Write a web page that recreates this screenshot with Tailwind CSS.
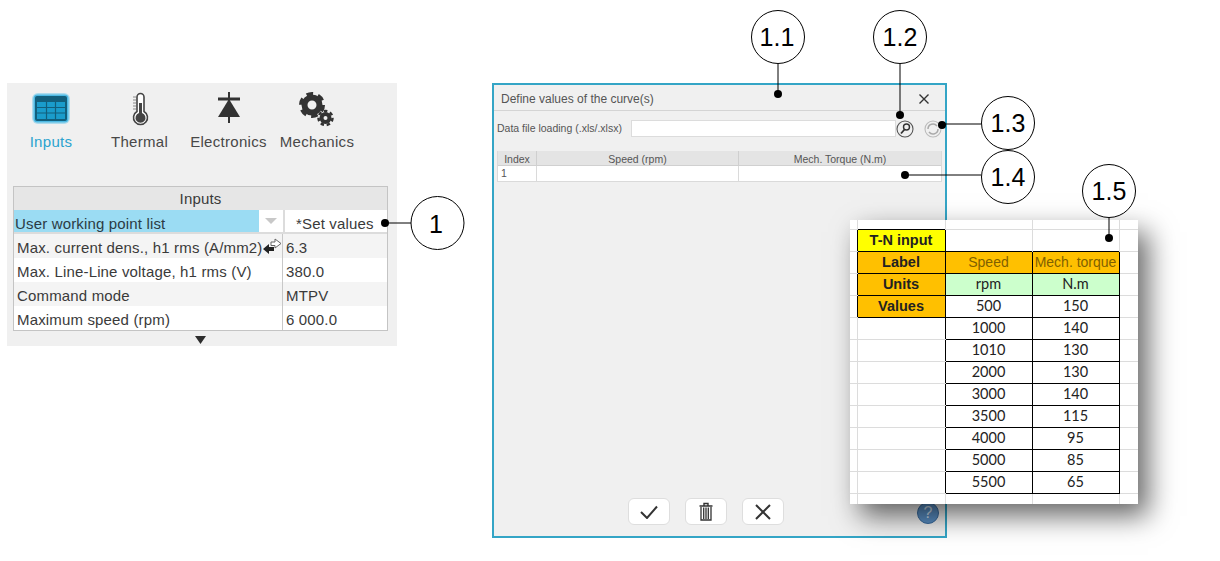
<!DOCTYPE html>
<html lang="en">
<head>
<meta charset="UTF-8">
<title>Define values of the curve(s)</title>
<script src="https://cdn.jsdelivr.net/npm/@tailwindcss/browser@4"></script>
</head>
<body class="bg-white font-['Liberation_Sans',sans-serif]">
<div class="relative w-[1220px] h-[561px] overflow-hidden">
  <div class="flex items-start pt-[83px] pl-[7px]">

    <!-- Left panel -->
    <div class="w-[390px] h-[263px] bg-[#f0f0f0] flex flex-col shrink-0">
      <div class="grid grid-cols-[88px_89px_89px_88px] h-[103px] pt-[8px] text-[15px] tracking-[0.3px] text-[#484848]">
        <div class="flex flex-col items-center">
          <svg class="h-[36px] w-[48px]" viewBox="0 0 48 36">
            <rect x="5" y="2" width="38" height="31" rx="6" fill="#5cc4ea" opacity="0.45"/>
            <rect x="6.500" y="3.500" width="35" height="28" rx="4" fill="#35b0e0" opacity="0.8"/>
            <rect x="8" y="5" width="32" height="25" rx="2" fill="#125f7c"/>
            <rect x="10" y="11" width="28" height="17" fill="#1a9ccb"/>
            <path d="M10 16.500H38M10 22H38M19.500 11V28M28.500 11V28" stroke="#125f7c" stroke-width="1.200" fill="none"/>
          </svg>
          <span class="mt-[4px] text-[#2aa3cf]">Inputs</span>
        </div>
        <div class="flex flex-col items-center">
          <svg class="h-[36px] w-[24px]" viewBox="0 0 24 36">
            <path d="M9 20V6a3.500 3.500 0 0 1 7 0V20.500a7 7 0 1 1-7 0Z" fill="#fff" stroke="#444" stroke-width="1.600"/>
            <path d="M11 12h3v10a5 5 0 1 1-3 0Z" fill="#444"/>
            <path d="M5 6h3M5 9h3M5 12h3M5 15h3M5 18h3" stroke="#888" stroke-width="1"/>
          </svg>
          <span class="mt-[4px]">Thermal</span>
        </div>
        <div class="flex flex-col items-center">
          <svg class="h-[36px] w-[26px]" viewBox="0 0 26 36">
            <path d="M13 1V32" stroke="#333" stroke-width="2"/>
            <path d="M2 8H24" stroke="#333" stroke-width="3"/>
            <path d="M13 8L24 26H2Z" fill="#333"/>
          </svg>
          <span class="mt-[4px]">Electronics</span>
        </div>
        <div class="flex flex-col items-center">
          <svg class="h-[36px] w-[40px]" viewBox="0 0 40 36">
            <circle cx="15" cy="14" r="7.500" fill="none" stroke="#333" stroke-width="6"/>
            <circle cx="15" cy="14" r="11" fill="none" stroke="#333" stroke-width="4" stroke-dasharray="6.500 5.020"/>
            <circle cx="28.500" cy="27" r="4" fill="none" stroke="#333" stroke-width="4"/>
            <circle cx="28.500" cy="27" r="7" fill="none" stroke="#333" stroke-width="2.500" stroke-dasharray="3.500 2.720"/>
          </svg>
          <span class="mt-[4px]">Mechanics</span>
        </div>
      </div>

      <div class="ml-[6px] w-[375px] border border-[#c4c4c4] text-[15px] text-[#3a3a3a] leading-[28px] tracking-[0.16px]">
        <div class="h-[23px] leading-[24px] bg-[#e6e6e6] text-center">Inputs</div>
        <div class="flex h-[24px] border-b-2 border-[#dcdcdc] bg-white">
          <div class="w-[245px] px-[1px] bg-[#9bdcf3] text-[#2b3b44]">User working point list</div>
          <div class="w-[24px] flex items-center justify-center">
            <svg class="w-[12px] h-[6px]" viewBox="0 0 12 6"><path d="M0 0H12L6 6Z" fill="#c8c8c8"/></svg>
          </div>
          <div class="flex-1 border-l-2 border-[#dcdcdc] pl-[11px]">*Set values</div>
        </div>
        <div class="relative flex h-[24px] bg-[#f4f4f4]">
          <div class="w-[269px] pl-[3px] border-r border-[#c8c8c8]">Max. current dens., h1 rms (A/mm2)</div>
          <div class="pl-[3px]">6.3</div>
          <svg class="absolute left-[249px] top-[4px] w-[19px] h-[17px]" viewBox="0 0 19 17">
            <path d="M8 4H12V1L18 5.500L12 10V7.500H8Z" fill="#fff" stroke="#666" stroke-width="1"/>
            <path d="M11 9H6V6L0 11L6 16V13H11Z" fill="#222"/>
          </svg>
        </div>
        <div class="flex h-[24px] bg-white">
          <div class="w-[269px] pl-[3px] border-r border-[#c8c8c8]">Max. Line-Line voltage, h1 rms (V)</div>
          <div class="pl-[3px]">380.0</div>
        </div>
        <div class="flex h-[24px] bg-[#f4f4f4]">
          <div class="w-[269px] pl-[3px] border-r border-[#c8c8c8]">Command mode</div>
          <div class="pl-[3px]">MTPV</div>
        </div>
        <div class="flex h-[24px] bg-white overflow-hidden">
          <div class="w-[269px] pl-[3px] border-r border-[#c8c8c8]">Maximum speed (rpm)</div>
          <div class="pl-[3px]">6 000.0</div>
        </div>
      </div>
      <div class="flex justify-center mt-[5px] pr-[4px]">
        <svg class="w-[11px] h-[8px]" viewBox="0 0 11 8"><path d="M0 0H11L5.500 8Z" fill="#2d2d2d"/></svg>
      </div>
    </div>

    <!-- Dialog -->
    <div class="relative ml-[95px] w-[455px] h-[455px] shrink-0 bg-[#f0f0f0] border-2 border-[#34a5c6] flex flex-col text-[#555]">
      <div class="flex items-center justify-between h-[26px] pt-[2px] pl-[7px] pr-[16px] border-b border-[#d4d4d4] text-[12px]">
        <span>Define values of the curve(s)</span>
        <svg class="w-[10px] h-[10px]" viewBox="0 0 10 10"><path d="M0.500 0.500L9.500 9.500M9.500 0.500L0.500 9.500" stroke="#333" stroke-width="1.400"/></svg>
      </div>
      <div class="flex items-center h-[17px] mt-[9px] pl-[3px] text-[10.500px]">
        <span class="w-[134px] pt-[1px]">Data file loading (.xls/.xlsx)</span>
        <div class="w-[265px] h-[17px] bg-white border border-[#dcdcdc]"></div>
        <svg class="w-[18px] h-[18px]" viewBox="0 0 18 18">
          <circle cx="9" cy="9" r="8" fill="none" stroke="#555" stroke-width="1.100"/>
          <circle cx="10.500" cy="7" r="3" fill="none" stroke="#333" stroke-width="1.400"/>
          <path d="M8.500 9.500L5 13.500" stroke="#333" stroke-width="1.800"/>
        </svg>
        <svg class="w-[18px] h-[18px] ml-[10px]" viewBox="0 0 18 18">
          <circle cx="9" cy="9" r="8" fill="none" stroke="#bbb" stroke-width="1.100"/>
          <path d="M4 9a5 5 0 0 1 9-3M14 9a5 5 0 0 1-9 3" fill="none" stroke="#aaa" stroke-width="1.500"/>
        </svg>
      </div>
      <div class="mt-[14px] mx-[3px] w-[445px] border-l border-r border-b border-[#dadada] text-[10.500px]">
        <div class="flex h-[15px] leading-[17px] bg-[#e4e4e4] text-center border-b border-[#d0d0d0]">
          <div class="w-[39px] border-r border-[#cfcfcf]">Index</div>
          <div class="w-[202px] border-r border-[#cfcfcf]">Speed (rpm)</div>
          <div class="flex-1">Mech. Torque (N.m)</div>
        </div>
        <div class="flex h-[15px] leading-[15px] bg-white">
          <div class="w-[39px] pl-[3px] border-r border-[#dadada]">1</div>
          <div class="w-[202px] border-r border-[#dadada]"></div>
          <div class="flex-1"></div>
        </div>
      </div>
      <div class="mt-auto mb-[11px] flex justify-center gap-[15px] pr-[27px]">
        <div class="w-[42px] h-[27px] bg-white border border-[#dedede] rounded-md flex items-center justify-center">
          <svg class="w-[20px] h-[14px]" viewBox="0 0 20 14"><path d="M2 7L8 13L18 1.500" fill="none" stroke="#333" stroke-width="2"/></svg>
        </div>
        <div class="w-[42px] h-[27px] bg-white border border-[#dedede] rounded-md flex items-center justify-center">
          <svg class="w-[14px] h-[19px]" viewBox="0 0 14 19">
            <path d="M0.500 4H13.500M5 3.500V1.500H9V3.500" fill="none" stroke="#333" stroke-width="1.400"/>
            <path d="M2 5V18H12V5M4.700 5.500V17M7 5.500V17M9.300 5.500V17" fill="none" stroke="#333" stroke-width="1.300"/>
          </svg>
        </div>
        <div class="w-[42px] h-[27px] bg-white border border-[#dedede] rounded-md flex items-center justify-center">
          <svg class="w-[16px] h-[16px]" viewBox="0 0 16 16"><path d="M1 1L15 15M15 1L1 15" stroke="#333" stroke-width="2"/></svg>
        </div>
      </div>
      <div class="absolute left-[423px] top-[417px] w-[22px] h-[22px] rounded-full bg-[#5a8fc4] border border-[#3a6c9f] flex items-center justify-center text-[16px] leading-none text-[#cfe0f0]">?</div>
    </div>
  </div>

  <!-- Spreadsheet picture over the dialog -->
  <div class="absolute left-[850px] top-[220px] w-[288px] h-[284px] bg-white overflow-hidden shadow-[10px_12px_26px_rgba(0,0,0,0.6)]">
    <table class="border-collapse table-fixed w-[288px] text-center text-[14.500px] leading-none text-[#222] font-['Lato',sans-serif]">
      <colgroup><col class="w-[7px]"><col class="w-[88px]"><col class="w-[87px]"><col class="w-[87px]"><col class="w-[19px]"></colgroup>
      <tbody>
        <tr class="h-[9px]"><td class="border-r border-b border-[#dcdcdc]"></td><td class="border-r border-[#dcdcdc]"></td><td class="border-r border-b border-[#dcdcdc]"></td><td class="border-r border-b border-[#dcdcdc]"></td><td class="border-b border-[#dcdcdc]"></td></tr>
        <tr class="h-[22px]"><td class="border-b border-[#dcdcdc]"></td><td class="border border-black bg-[#ffff00] font-bold text-[14.500px] font-['Liberation_Sans',sans-serif]">T-N input</td><td class="border-r border-[#dcdcdc]"></td><td class="border-r border-[#dcdcdc]"></td><td class="border-b border-[#dcdcdc]"></td></tr>
        <tr class="h-[22px]"><td class="border-b border-[#dcdcdc]"></td><td class="border border-black bg-[#ffc000] font-bold text-[14.500px] font-['Liberation_Sans',sans-serif]">Label</td><td class="border border-black bg-[#ffc000] text-[#7f6000] text-[14px] font-['Liberation_Sans',sans-serif]">Speed</td><td class="border border-black bg-[#ffc000] text-[#7f6000] text-[14px] whitespace-nowrap font-['Liberation_Sans',sans-serif]">Mech. torque</td><td class="border-b border-[#dcdcdc]"></td></tr>
        <tr class="h-[22px]"><td class="border-b border-[#dcdcdc]"></td><td class="border border-black bg-[#ffc000] font-bold text-[14.500px] font-['Liberation_Sans',sans-serif]">Units</td><td class="border border-black bg-[#ccffcc]">rpm</td><td class="border border-black bg-[#ccffcc]">N.m</td><td class="border-b border-[#dcdcdc]"></td></tr>
        <tr class="h-[22px]"><td class="border-b border-[#dcdcdc]"></td><td class="border border-black bg-[#ffc000] font-bold text-[14.500px] font-['Liberation_Sans',sans-serif]">Values</td><td class="border border-black">500</td><td class="border border-black">150</td><td class="border-b border-[#dcdcdc]"></td></tr>
        <tr class="h-[22px]"><td class="border-r border-b border-[#dcdcdc]"></td><td class="border-b border-[#dcdcdc]"></td><td class="border border-black">1000</td><td class="border border-black">140</td><td class="border-b border-[#dcdcdc]"></td></tr>
        <tr class="h-[22px]"><td class="border-r border-b border-[#dcdcdc]"></td><td class="border-b border-[#dcdcdc]"></td><td class="border border-black">1010</td><td class="border border-black">130</td><td class="border-b border-[#dcdcdc]"></td></tr>
        <tr class="h-[22px]"><td class="border-r border-b border-[#dcdcdc]"></td><td class="border-b border-[#dcdcdc]"></td><td class="border border-black">2000</td><td class="border border-black">130</td><td class="border-b border-[#dcdcdc]"></td></tr>
        <tr class="h-[22px]"><td class="border-r border-b border-[#dcdcdc]"></td><td class="border-b border-[#dcdcdc]"></td><td class="border border-black">3000</td><td class="border border-black">140</td><td class="border-b border-[#dcdcdc]"></td></tr>
        <tr class="h-[22px]"><td class="border-r border-b border-[#dcdcdc]"></td><td class="border-b border-[#dcdcdc]"></td><td class="border border-black">3500</td><td class="border border-black">115</td><td class="border-b border-[#dcdcdc]"></td></tr>
        <tr class="h-[22px]"><td class="border-r border-b border-[#dcdcdc]"></td><td class="border-b border-[#dcdcdc]"></td><td class="border border-black">4000</td><td class="border border-black">95</td><td class="border-b border-[#dcdcdc]"></td></tr>
        <tr class="h-[22px]"><td class="border-r border-b border-[#dcdcdc]"></td><td class="border-b border-[#dcdcdc]"></td><td class="border border-black">5000</td><td class="border border-black">85</td><td class="border-b border-[#dcdcdc]"></td></tr>
        <tr class="h-[22px]"><td class="border-r border-b border-[#dcdcdc]"></td><td class="border-b border-[#dcdcdc]"></td><td class="border border-black">5500</td><td class="border border-black">65</td><td class="border-b border-[#dcdcdc]"></td></tr>
        <tr class="h-[12px]"><td class="border-r border-[#dcdcdc]"></td><td class="border-r border-[#dcdcdc]"></td><td class="border-r border-[#dcdcdc]"></td><td class="border-r border-[#dcdcdc]"></td><td></td></tr>
      </tbody>
    </table>
  </div>

  <!-- Callouts -->
  <svg class="absolute inset-0 w-[1220px] h-[561px]" viewBox="0 0 1220 561" fill="none" font-family="Liberation Sans, sans-serif" font-size="25">
    <g stroke="#000" stroke-width="1" fill="#fff">
      <path d="M411 223H385M778 64V94M900 64V115M981 124H942M981 175H905M1109 218V238"/>
      <circle cx="437.500" cy="223" r="26.500"/>
      <circle cx="778" cy="37" r="26.500"/>
      <circle cx="900" cy="37" r="26.500"/>
      <circle cx="1008" cy="123" r="26.500"/>
      <circle cx="1008" cy="177" r="26.500"/>
      <circle cx="1109" cy="191" r="26.500"/>
    </g>
    <g fill="#000">
      <circle cx="385" cy="223" r="4"/>
      <circle cx="778" cy="94" r="4"/>
      <circle cx="900" cy="115" r="4"/>
      <circle cx="942" cy="125" r="4"/>
      <circle cx="905" cy="175" r="4"/>
      <circle cx="1109" cy="238" r="4"/>
      <g text-anchor="middle">
        <text x="436" y="233">1</text>
        <text x="777" y="46">1.1</text>
        <text x="900" y="46">1.2</text>
        <text x="1008" y="132">1.3</text>
        <text x="1008" y="186">1.4</text>
        <text x="1109" y="200">1.5</text>
      </g>
    </g>
  </svg>
</div>
</body>
</html>
